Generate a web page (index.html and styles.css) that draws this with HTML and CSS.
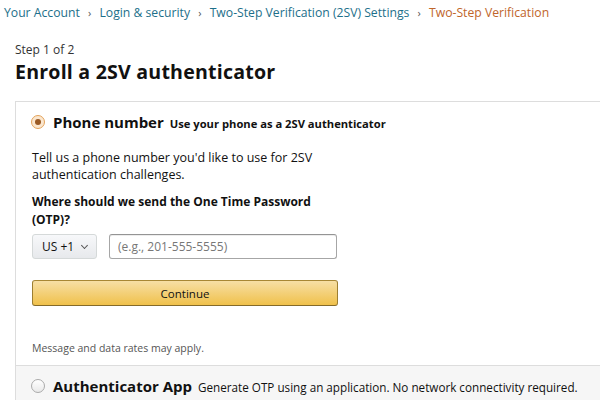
FILE: index.html
```html
<!DOCTYPE html>
<html lang="en">
<head>
    <meta charset="UTF-8">
    <meta name="viewport" content="width=device-width, initial-scale=1.0">
    <title>Enroll a 2SV authenticator</title>
    <link rel="stylesheet" href="styles.css">
</head>
<body>

    <nav class="breadcrumb">
        <a href="#">Your Account</a>
        <span class="sep">›</span>
        <a href="#">Login &amp; security</a>
        <span class="sep">›</span>
        <a href="#">Two-Step Verification (2SV) Settings</a>
        <span class="sep">›</span>
        <span class="current">Two-Step Verification</span>
    </nav>

    <div class="page">
        <div class="step">Step 1 of 2</div>
        <h1>Enroll a 2SV authenticator</h1>

        <div class="options">
            <div class="option selected">
                <div class="option-head">
                    <span class="radio checked"></span>
                    <span class="option-title">Phone number</span>
                    <span class="option-desc bold">Use your phone as a 2SV authenticator</span>
                </div>
                <div class="option-body">
                    <p class="intro">Tell us a phone number you'd like to use for 2SV authentication challenges.</p>
                    <label class="question">Where should we send the One Time Password (OTP)?</label>
                    <div class="phone-row">
                        <button class="country">US +1 <span class="chev"></span></button>
                        <input type="text" class="phone" placeholder="(e.g., 201-555-5555)">
                    </div>
                    <button class="continue">Continue</button>
                    <p class="note">Message and data rates may apply.</p>
                </div>
            </div>
            <div class="option">
                <div class="option-head">
                    <span class="radio"></span>
                    <span class="option-title">Authenticator App</span>
                    <span class="option-desc">Generate OTP using an application. No network connectivity required.</span>
                </div>
            </div>
        </div>
    </div>

</body>
</html>
```

FILE: styles.css
```css
body {
    font-family: 'Open Sans', 'Noto Sans', sans-serif;
    color: #111;
    background-color: #fff;
    margin: 0;
    overflow: hidden;
}
.breadcrumb {
    font-size: 12.2px;
    padding: 4px 0 0 4px;
    height: 20px;
    white-space: nowrap;
}
.breadcrumb a {
    color: #1d6f8a;
    text-decoration: none;
}
.breadcrumb .sep {
    color: #555;
    font-size: 11px;
    margin: 0 5px;
}
.breadcrumb .current {
    color: #c0652a;
}
.page {
    padding-left: 15px;
}
.step {
    margin-top: 17px;
    font-size: 12px;
    color: #333;
}
h1 {
    font-size: 19.6px;
    font-weight: 700;
    margin: 0 0 16px 0;
    letter-spacing: 0.2px;
}
.options {
    border: 1px solid #ddd;
    border-right: none;
    border-bottom: none;
}
.option {
    background-color: #f6f6f6;
    border-top: 1px solid #ddd;
}
.option.selected {
    background-color: #fff;
    border-top: none;
}
.option-head {
    display: flex;
    align-items: center;
    padding: 10px 15px;
    white-space: nowrap;
}
.radio {
    width: 12px;
    height: 12px;
    border-radius: 50%;
    border: 1px solid #aaa;
    background: linear-gradient(#fff, #e9e9e9);
    display: flex;
    justify-content: center;
    align-items: center;
    margin-right: 8px;
}
.radio.checked {
    border-color: #e3a25a;
    background: #fbe7cf;
}
.radio.checked::after {
    content: '';
    width: 6px;
    height: 6px;
    border-radius: 50%;
    background-color: #9a5a25;
}
.option-title {
    font-size: 15px;
    font-weight: 700;
    margin-right: 6px;
}
.option-desc {
    font-size: 11.7px;
    margin-top: 2px;
}
.option-desc.bold {
    font-size: 11.2px;
    font-weight: 700;
}
.option-body {
    padding: 6px 16px 10px 16px;
    width: 306px;
}
.intro {
    font-size: 12.5px;
    line-height: 17px;
    margin: 1px 0 10px 0;
}
.question {
    display: block;
    font-size: 12px;
    font-weight: 700;
    line-height: 18px;
    margin-bottom: 5px;
}
.phone-row {
    display: flex;
    gap: 12px;
}
.country {
    display: flex;
    align-items: center;
    font-family: inherit;
    font-size: 12px;
    color: #111;
    width: 65px;
    height: 25px;
    border: 1px solid #d5d9d9;
    border-radius: 3px;
    background: linear-gradient(#f7f8fa, #e7e9ec);
    padding: 0 9px;
    white-space: nowrap;
}
.chev {
    width: 4px;
    height: 4px;
    border-right: 1.5px solid #555;
    border-bottom: 1.5px solid #555;
    transform: rotate(45deg);
    margin: 0 0 3px 8px;
}
.phone {
    font-family: inherit;
    font-size: 12px;
    width: 228px;
    height: 25px;
    box-sizing: border-box;
    border: 1px solid #a6a6a6;
    border-top-color: #949494;
    border-radius: 3px;
    padding: 0 8px;
    box-shadow: 0 1px 0 rgba(0, 0, 0, 0.07) inset;
}
.phone::placeholder {
    color: #777;
}
.continue {
    display: block;
    font-family: inherit;
    font-size: 11.5px;
    color: #111;
    width: 306px;
    height: 26px;
    margin-top: 21px;
    border: 1px solid;
    border-color: #a88734 #9c7e31 #846a29;
    border-radius: 3px;
    background: linear-gradient(#f7dfa5, #f0c14b);
}
.note {
    font-size: 10.5px;
    color: #555;
    margin: 35px 0 0 0;
}
```
